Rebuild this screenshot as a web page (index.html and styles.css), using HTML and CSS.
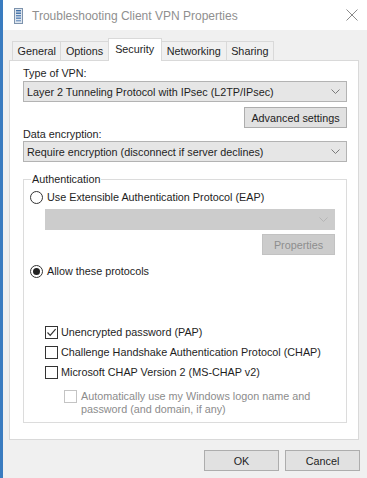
FILE: index.html
```html
<!DOCTYPE html>
<html>
<head>
<meta charset="utf-8">
<link rel="stylesheet" href="styles.css">
</head>
<body>
<div class="window">
  <div class="titlebar">
    <svg class="app-icon" width="9" height="16" viewBox="0 0 9 16">
      <rect x="0.5" y="0.5" width="8" height="15" fill="#dfe6ee" stroke="#7d93ad"/>
      <rect x="2" y="2" width="5" height="1.4" fill="#3f6ea6"/>
      <rect x="2" y="4.5" width="5" height="1.4" fill="#3f6ea6"/>
      <rect x="2" y="7" width="5" height="1.4" fill="#5c86b8"/>
      <rect x="2" y="9.5" width="5" height="1.4" fill="#5c86b8"/>
      <rect x="2" y="12" width="5" height="1.4" fill="#7f9fc6"/>
    </svg>
    <span class="title">Troubleshooting Client VPN Properties</span>
    <svg class="close" width="12" height="12" viewBox="0 0 12 12">
      <path d="M0.5 0.5 L11.5 11.5 M11.5 0.5 L0.5 11.5" stroke="#8a8a8a" stroke-width="1" fill="none"/>
    </svg>
  </div>
  <div class="client">
    <div class="tabs">
      <div class="tab">General</div>
      <div class="tab">Options</div>
      <div class="tab active">Security</div>
      <div class="tab">Networking</div>
      <div class="tab">Sharing</div>
    </div>
    <div class="panel">
      <div class="label first">Type of VPN:</div>
      <div class="select">
        <span>Layer 2 Tunneling Protocol with IPsec (L2TP/IPsec)</span>
        <svg class="chev" width="9" height="5" viewBox="0 0 9 5"><path d="M0.5 0.5 L4.5 4.5 L8.5 0.5" stroke="#7a7a7a" fill="none"/></svg>
      </div>
      <div class="right-row"><div class="button adv">Advanced settings</div></div>
      <div class="label">Data encryption:</div>
      <div class="select">
        <span>Require encryption (disconnect if server declines)</span>
        <svg class="chev" width="9" height="5" viewBox="0 0 9 5"><path d="M0.5 0.5 L4.5 4.5 L8.5 0.5" stroke="#7a7a7a" fill="none"/></svg>
      </div>
      <fieldset class="group">
        <legend>Authentication</legend>
        <div class="option">
          <span class="radio"></span>
          <span>Use Extensible Authentication Protocol (EAP)</span>
        </div>
        <div class="select disabled">
          <span></span>
          <svg class="chev" width="9" height="5" viewBox="0 0 9 5"><path d="M0.5 0.5 L4.5 4.5 L8.5 0.5" stroke="#b5b5b5" fill="none"/></svg>
        </div>
        <div class="right-row"><div class="button props">Properties</div></div>
        <div class="option allow">
          <span class="radio checked"></span>
          <span>Allow these protocols</span>
        </div>
        <div class="option check pap">
          <span class="box">
            <svg width="11" height="11" viewBox="0 0 11 11"><path d="M1.5 5.5 L4.2 8.3 L9.6 2.2" stroke="#333" stroke-width="1.2" fill="none"/></svg>
          </span>
          <span>Unencrypted password (PAP)</span>
        </div>
        <div class="option check">
          <span class="box"></span>
          <span>Challenge Handshake Authentication Protocol (CHAP)</span>
        </div>
        <div class="option check">
          <span class="box"></span>
          <span>Microsoft CHAP Version 2 (MS-CHAP v2)</span>
        </div>
        <div class="option check sub">
          <span class="box dis"></span>
          <span>Automatically use my Windows logon name and<br>password (and domain, if any)</span>
        </div>
      </fieldset>
    </div>
    <div class="footer">
      <div class="button foot">OK</div>
      <div class="button foot">Cancel</div>
    </div>
  </div>
</div>
</body>
</html>
```

FILE: styles.css
```css
* { box-sizing: border-box; }
html, body { margin: 0; padding: 0; }
body {
  width: 367px;
  height: 478px;
  overflow: hidden;
  font-family: "Liberation Sans", Arial, sans-serif;
  font-size: 10.8px;
  color: #1e1e1e;
  background: #f0f0f0;
}
.window {
  width: 367px;
  height: 478px;
  border-left: 3px solid #3a7cc0;
  display: flex;
  flex-direction: column;
  background: #f0f0f0;
}
.titlebar {
  height: 30px;
  background: #ffffff;
  display: flex;
  align-items: center;
  padding-left: 11px;
  flex-shrink: 0;
}
.app-icon { margin-top: 1px; }
.title {
  margin-left: 9px;
  font-size: 12px;
  color: #8f8f8f;
  flex: 1;
  padding-top: 1px;
}
.close { margin-right: 9px; margin-top: 0px; }
.client {
  flex: 1;
  padding: 8px 8px 0 6px;
  display: flex;
  flex-direction: column;
}
.tabs {
  display: flex;
  align-items: flex-end;
  height: 22px;
  padding-left: 3px;
}
.tab {
  height: 19px;
  line-height: 18px;
  padding: 0 4.5px;
  border: 1px solid #d9d9d9;
  border-bottom: none;
  border-right: none;
  background: #f0f0f0;
  color: #1e1e1e;
}
.tab:last-child { border-right: 1px solid #d9d9d9; }
.tab.active {
  height: 23px;
  line-height: 20px;
  padding: 0 6.5px;
  background: #ffffff;
  border-right: 1px solid #d9d9d9;
  margin-bottom: -1px;
  position: relative;
  z-index: 1;
}
.tab.active + .tab { border-left: none; padding: 0 5px; }
.panel {
  height: 380px;
  background: #ffffff;
  border: 1px solid #d9d9d9;
  padding: 6px 11px 0 13px;
  display: flex;
  flex-direction: column;
}
.label {
  height: 13px;
  line-height: 13px;
}
.label.first { margin-bottom: 1px; }
.select {
  height: 21px;
  background: #e6e6e6;
  border: 1px solid #b3b3b3;
  display: flex;
  align-items: center;
  justify-content: space-between;
  padding: 0 6px 0 3px;
}
.select .chev { flex-shrink: 0; }
.right-row {
  display: flex;
  justify-content: flex-end;
}
.button {
  height: 21px;
  background: #e1e1e1;
  border: 1px solid #adadad;
  display: flex;
  align-items: center;
  justify-content: center;
}
.adv { width: 103px; margin-top: 5px; }
.group {
  margin: 10px 0 0 0;
  padding: 4px 11px 5px 6px;
  border: 1px solid #dcdcdc;
  min-width: 0;
  height: 251px;
}
.group legend {
  padding: 0 1px;
  margin-left: 1px;
  line-height: 14px;
  color: #1e1e1e;
}
.option {
  display: flex;
  align-items: center;
  height: 14px;
  line-height: 14px;
}
.radio {
  width: 13px;
  height: 13px;
  border: 1px solid #333333;
  border-radius: 50%;
  background: #ffffff;
  margin-right: 4px;
  display: flex;
  align-items: center;
  justify-content: center;
  flex-shrink: 0;
}
.radio.checked::after {
  content: "";
  width: 7px;
  height: 7px;
  border-radius: 50%;
  background: #222222;
}
.select.disabled {
  margin: 5px 0 0 15px;
  background: #cccccc;
  border-color: #cccccc;
}
.props {
  width: 73px;
  margin-top: 4px;
  background: #cccccc;
  border-color: #c2c2c2;
  color: #8e8e8e;
}
.allow { margin-top: 9px; }
.check { margin-left: 15px; }
.check.pap { margin-top: 47px; }
.check + .check { margin-top: 6px; }
.box {
  width: 13px;
  height: 13px;
  border: 1px solid #333333;
  background: #ffffff;
  margin-right: 3px;
  flex-shrink: 0;
  display: flex;
  align-items: center;
  justify-content: center;
}
.box.dis { border-color: #c4c4c4; }
.check.sub {
  margin-left: 34px;
  margin-top: 11px;
  height: auto;
  align-items: flex-start;
  line-height: 13px;
  color: #8c8c8c;
}
.check.sub .box { margin-right: 4px; margin-top: 0; }
.footer {
  display: flex;
  justify-content: flex-end;
  gap: 6px;
  margin-top: 10px;
  margin-right: -1px;
}
.foot { width: 75px; height: 21px; }
```
